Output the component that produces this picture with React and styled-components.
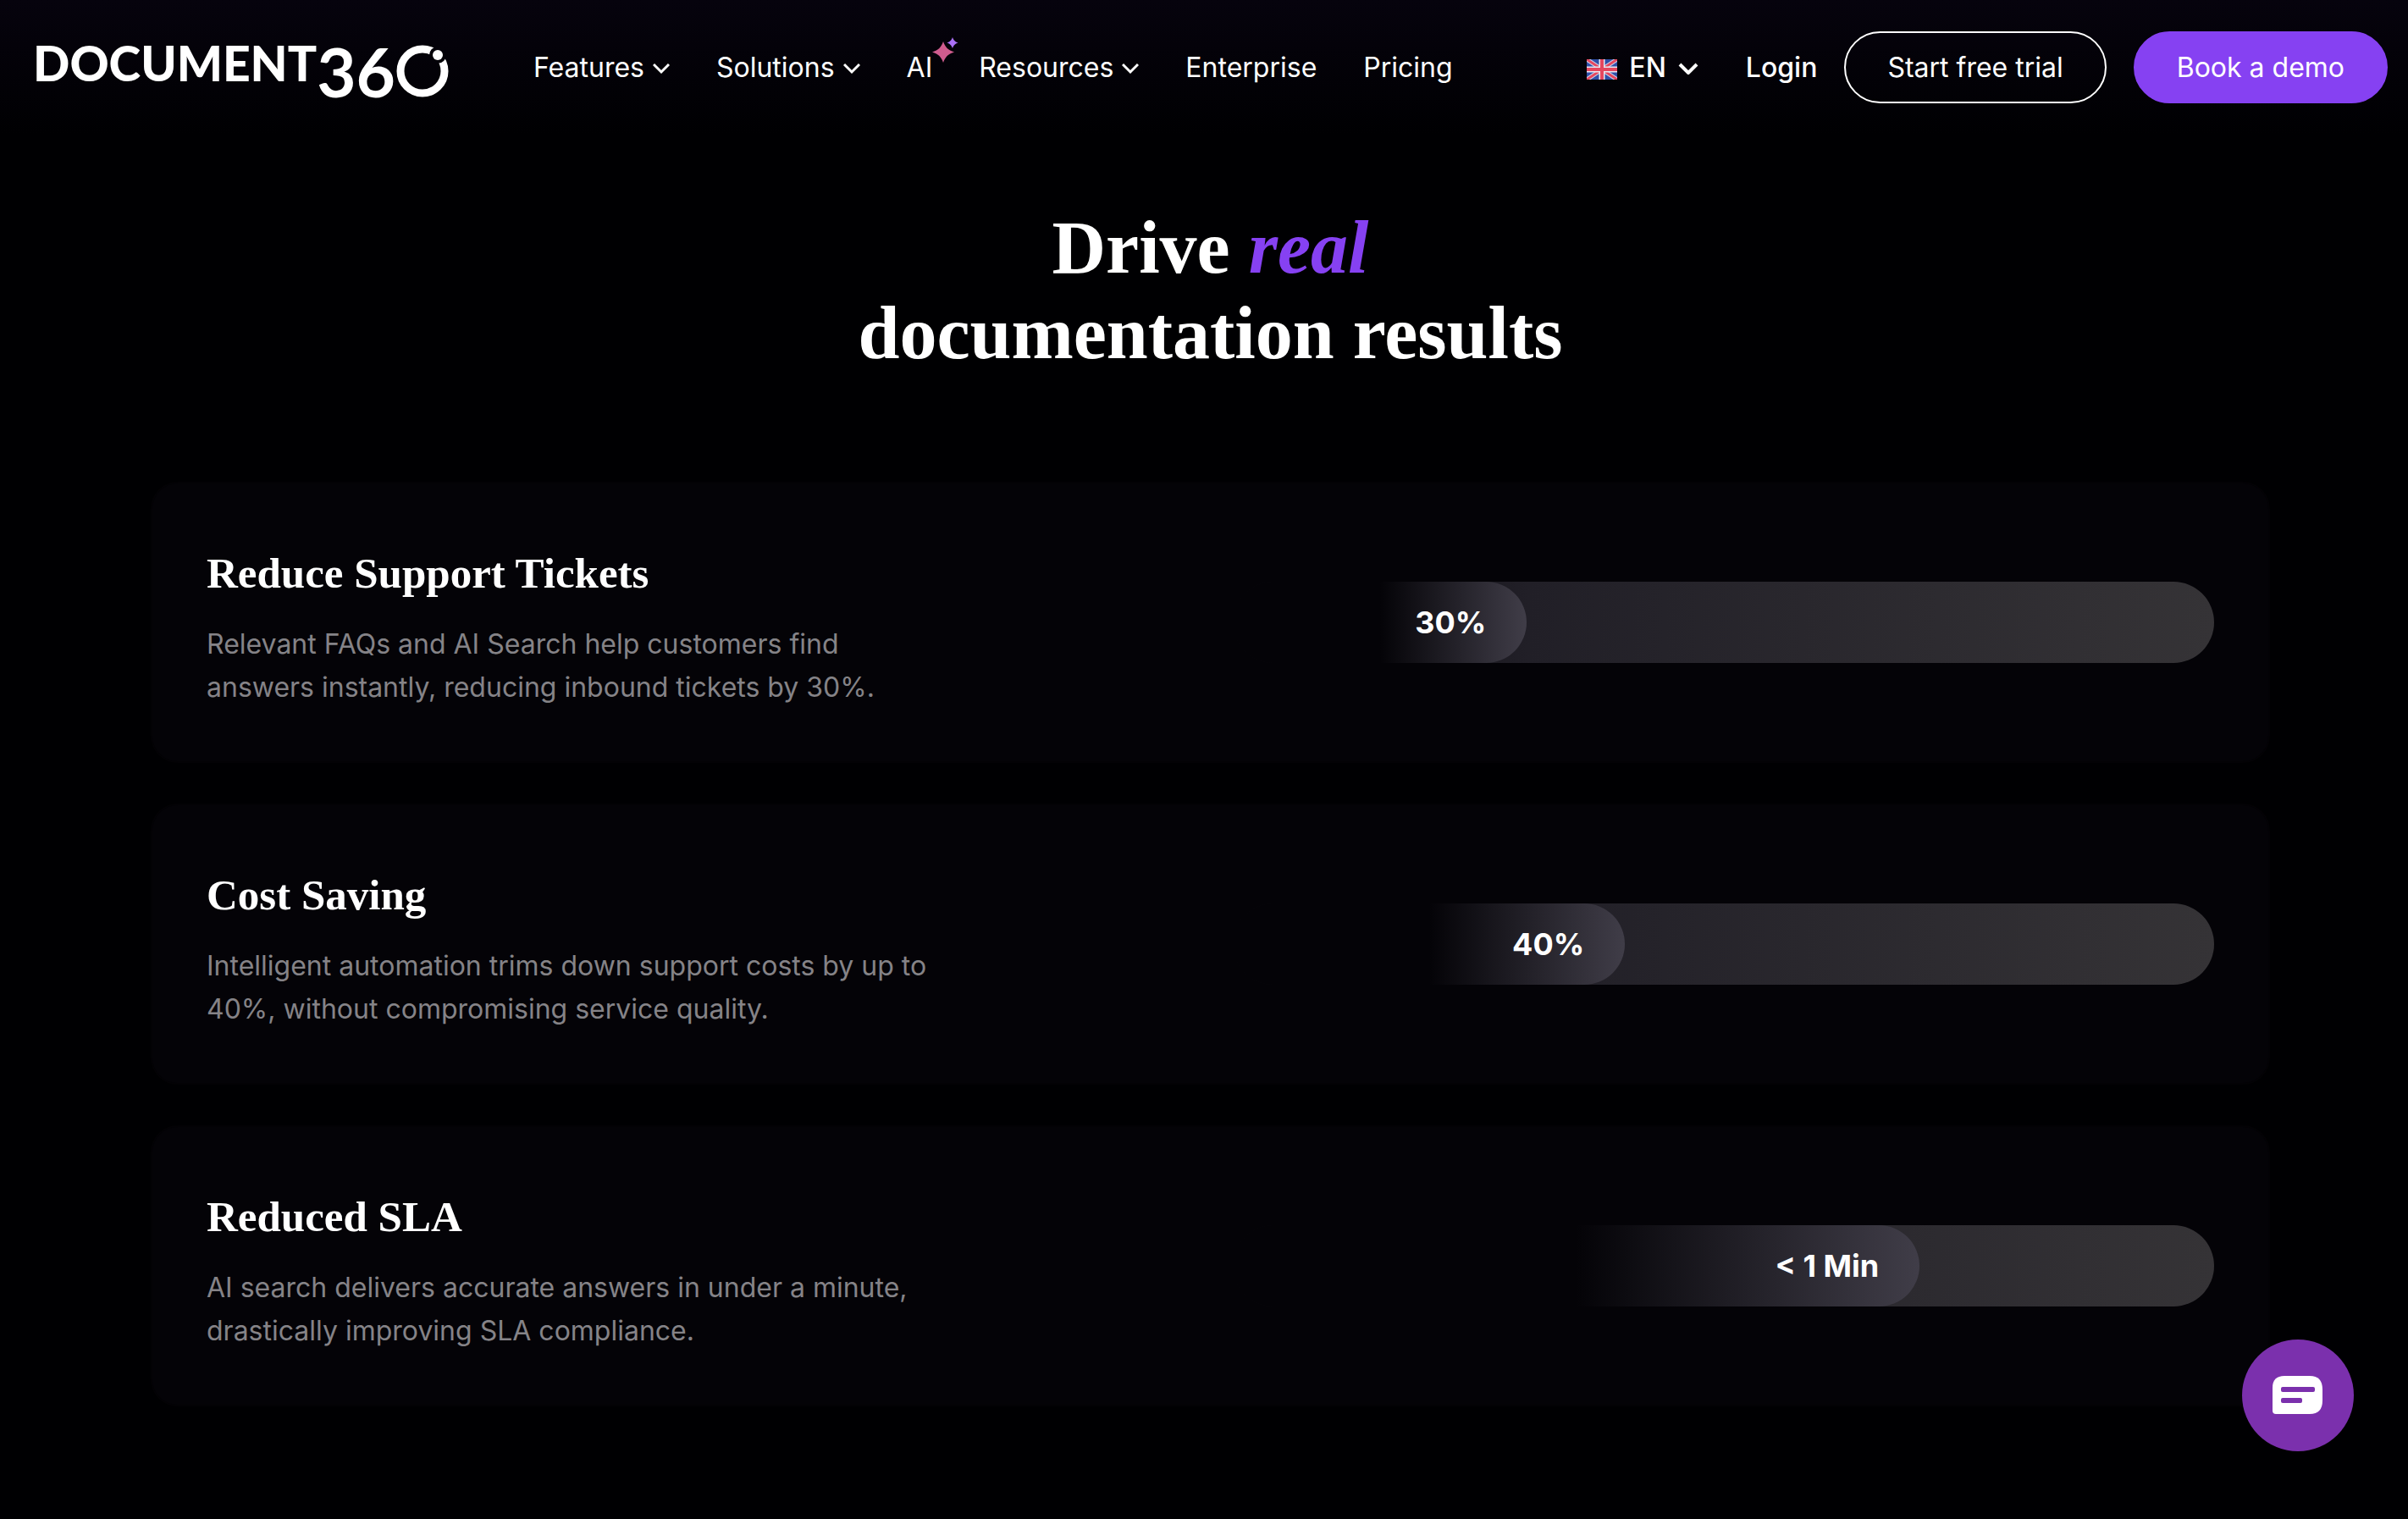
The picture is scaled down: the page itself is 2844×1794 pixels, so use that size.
import React from 'react'
import styled, { createGlobalStyle } from 'styled-components'

const navItems = [
    { label: 'Features', menu: true },
    { label: 'Solutions', menu: true },
    { label: 'AI', sparkle: true },
    { label: 'Resources', menu: true },
    { label: 'Enterprise' },
    { label: 'Pricing' }
]

const results = [
    {
        title: 'Reduce Support Tickets',
        text: 'Relevant FAQs and AI Search help customers find answers instantly, reducing inbound tickets by 30%.',
        value: '30%',
        fill: 30
    },
    {
        title: 'Cost Saving',
        text: 'Intelligent automation trims down support costs by up to 40%, without compromising service quality.',
        value: '40%',
        fill: 40
    },
    {
        title: 'Reduced SLA',
        text: 'AI search delivers accurate answers in under a minute, drastically improving SLA compliance.',
        value: '< 1 Min',
        fill: 70
    }
]

const Chevron = ({ bold }) => (
    <svg width={bold ? 24 : 20} height='16' viewBox={bold ? '0 0 24 16' : '0 0 20 16'} fill='none' stroke='#fff' aria-hidden='true'>
        {bold
            ? <path d='M2 4 L12 14 L22 4' strokeWidth='4' />
            : <path d='M1 4 L10 13 L19 4' strokeWidth='3' />}
    </svg>
)

const Sparkle = () => (
    <SparkleIcon width='32' height='32' viewBox='0 0 32 32' aria-hidden='true'>
        <path fill='#cf5c8e' d='M13 5 C15.500 12 18.500 15 26 17.500 C18.500 20 15.500 23 13 30 C10.500 23 7.500 20 0 17.500 C7.500 15 10.500 12 13 5 Z' />
        <path fill='#a970f5' d='M24 0 C25.300 3.600 26.800 5.200 30.500 6.500 C26.800 7.800 25.300 9.400 24 13 C22.700 9.400 21.200 7.800 17.500 6.500 C21.200 5.200 22.700 3.600 24 0 Z' />
    </SparkleIcon>
)

const Flag = () => (
    <svg width='36' height='28' viewBox='0 -4 36 28' role='img' aria-label='United Kingdom'>
        <rect width='36' height='24' fill='#2f4fa8' />
        <svg width='36' height='24'>
            <path d='M0 0 L36 24 M36 0 L0 24' stroke='#cfd5ea' strokeWidth='5' />
            <path d='M0 0 L36 24 M36 0 L0 24' stroke='#e5475f' strokeWidth='3' />
        </svg>
        <path d='M18 0 V24 M0 12 H36' stroke='#e9e6f0' strokeWidth='7' />
        <path d='M18 0 V24 M0 12 H36' stroke='#e5475f' strokeWidth='4' />
    </svg>
)

const LogoRing = () => (
    <svg width='64' height='64' viewBox='0 0 64 64' aria-hidden='true'>
        <mask id='ring-gap'>
            <rect width='64' height='64' fill='#fff' />
            <circle cx='50' cy='13' r='10' fill='#000' />
        </mask>
        <circle cx='32' cy='32' r='26' fill='none' stroke='#fff' strokeWidth='9' mask='url(#ring-gap)' />
        <circle cx='50' cy='13' r='6' fill='#fff' />
    </svg>
)

const ChatIcon = () => (
    <svg width='60' height='46' viewBox='0 0 60 46' aria-hidden='true'>
        <path fill='#fff' d='M14 0 H44 Q59 0 59 16 V29 Q59 45 44 45 H4 Q0 45 0 41 V14 Q0 0 14 0 Z' />
        <rect x='10' y='13' width='40' height='6' rx='2' fill='#7b30ad' />
        <rect x='10' y='26' width='25' height='6' rx='2' fill='#7b30ad' />
    </svg>
)

const ResultCard = ({ result }) => {
    const { title, text, value, fill } = result

    return (
        <Card>
            <CardCopy>
                <CardTitle>{title}</CardTitle>
                <CardText>{text}</CardText>
            </CardCopy>
            <Track>
                <Fill style={{ width: `${fill}%` }}>{value}</Fill>
            </Track>
        </Card>
    )
}

export default function App() {
    return (
        <>
            <GlobalStyle />
            <Header>
                <Logo href='#home' aria-label='Document360'>
                    <LogoWord>DOCUMENT</LogoWord>
                    <LogoDigits>36</LogoDigits>
                    <LogoRing />
                </Logo>
                <Nav>
                    {navItems.map(item => item.menu ? (
                        <NavButton key={item.label} type='button' aria-haspopup='true'>
                            {item.label}
                            <Chevron />
                        </NavButton>
                    ) : (
                        <NavLink key={item.label} href={`#${item.label.toLowerCase()}`}>
                            {item.label}
                            {item.sparkle && <Sparkle />}
                        </NavLink>
                    ))}
                </Nav>
                <Actions>
                    <LangButton type='button' aria-haspopup='true'>
                        <Flag />
                        EN
                        <Chevron bold />
                    </LangButton>
                    <LoginLink href='#login'>Login</LoginLink>
                    <PillLink href='#trial'>Start free trial</PillLink>
                    <PillLink href='#demo' $filled>Book a demo</PillLink>
                </Actions>
            </Header>
            <Main>
                <Heading>
                    Drive <em>real</em>
                    <br />
                    documentation results
                </Heading>
                <CardList>
                    {results.map(result => <ResultCard key={result.title} result={result} />)}
                </CardList>
            </Main>
            <ChatButton type='button' aria-label='Open chat'>
                <ChatIcon />
            </ChatButton>
        </>
    )
}

const GlobalStyle = createGlobalStyle`
    * {
        box-sizing: border-box;
    }
    body {
        margin: 0;
        min-height: 100vh;
        background: #000002;
        color: #fff;
        font-family: Inter, 'Liberation Sans', sans-serif;
        font-size: 32px;
    }
    a {
        color: inherit;
        text-decoration: none;
    }
    button {
        padding: 0;
        border: 0;
        background: none;
        color: inherit;
        font: inherit;
        cursor: pointer;
    }
`

const Header = styled.header`
    display: flex;
    align-items: center;
    height: 159px;
    padding: 0 24px 0 39px;
    background: linear-gradient(#06030d, #000002);
`

const Logo = styled.a`
    display: flex;
    align-items: flex-start;
    height: 72px;
    padding-top: 8px;
    font-family: Lato, 'Liberation Sans', sans-serif;
    font-weight: 700;
`

const LogoWord = styled.span`
    font-size: 57px;
    font-weight: 900;
    line-height: 44px;
`

const LogoDigits = styled.span`
    font-size: 80px;
    line-height: 64px;
`

const Nav = styled.nav`
    display: flex;
    align-items: center;
    gap: 55px;
    margin-left: 99px;
    line-height: 40px;
`

const NavButton = styled.button`
    display: flex;
    align-items: center;
    gap: 10px;
`

const NavLink = styled.a`
    position: relative;
`

const SparkleIcon = styled.svg`
    position: absolute;
    left: 100%;
    top: -16px;
`

const Actions = styled.div`
    display: flex;
    align-items: center;
    gap: 32px;
    margin-left: auto;
`

const LangButton = styled.button`
    display: flex;
    align-items: center;
    gap: 14px;
    margin-right: 24px;
    font-weight: 500;
`

const LoginLink = styled.a`
    font-weight: 500;
`

const PillLink = styled.a`
    padding: 20px 49px;
    border: 2px solid ${props => props.$filled ? '#8641f2' : '#fff'};
    border-radius: 43px;
    background: ${props => props.$filled ? '#8641f2' : 'transparent'};
    line-height: 41px;
`

const Main = styled.main`
    padding: 83px 163px 133px 178px;
`

const Heading = styled.h2`
    margin: 0 0 125px;
    font-family: 'Liberation Serif', serif;
    font-size: 88px;
    font-weight: 700;
    line-height: 101px;
    text-align: center;

    em {
        color: #8641f2;
    }
`

const CardList = styled.div`
    display: grid;
    gap: 48px;
`

const Card = styled.article`
    display: grid;
    grid-template-columns: 1fr 1fr;
    gap: 52px;
    align-items: center;
    min-height: 332px;
    padding: 60px 64px;
    border: 2px solid #030205;
    border-radius: 32px;
    background: #040307;
`

const CardCopy = styled.div`
    padding-top: 12px;
`

const CardTitle = styled.h3`
    margin: 0 0 26px;
    font-family: 'Liberation Serif', serif;
    font-size: 51px;
    font-weight: 700;
    line-height: 64px;
`

const CardText = styled.p`
    max-width: 864px;
    margin: 0;
    color: #858387;
    line-height: 51px;
`

const Track = styled.div`
    height: 96px;
    border-radius: 48px;
    background: linear-gradient(90deg, #040307, #211f27 30%, #353336);
    overflow: hidden;
`

const Fill = styled.div`
    display: flex;
    align-items: center;
    justify-content: flex-end;
    height: 100%;
    padding-right: 48px;
    border-radius: 0 48px 48px 0;
    background: linear-gradient(90deg, #040307 50%, #403d48);
    font-size: 36px;
    font-weight: 700;
`

const ChatButton = styled.button`
    position: fixed;
    right: 64px;
    bottom: 80px;
    display: grid;
    place-items: center;
    width: 132px;
    height: 132px;
    border-radius: 50%;
    background: #7b30ad;
`
